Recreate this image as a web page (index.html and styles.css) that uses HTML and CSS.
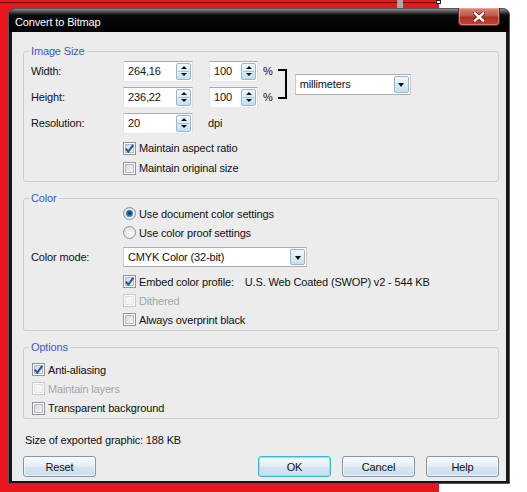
FILE: index.html
```html
<!DOCTYPE html>
<html>
<head>
<meta charset="utf-8">
<title>Convert to Bitmap</title>
<link rel="stylesheet" href="styles.css">
</head>
<body>
<div class="desk">
  <div class="wall"></div>
  <div class="wall-line"></div>
  <div class="wall-bar"></div>
  <div class="wall-handle"></div>

  <div class="dialog">
    <div class="titlebar"><span class="title">Convert to Bitmap</span></div>
    <div class="close">
      <svg width="12" height="10" viewBox="0 0 12 10">
        <path d="M2 1.5 L10 8.5 M10 1.5 L2 8.5" stroke="#6a1a14" stroke-width="4" stroke-linecap="square"/>
        <path d="M2 1.5 L10 8.5 M10 1.5 L2 8.5" stroke="#ffffff" stroke-width="2.4" stroke-linecap="square"/>
      </svg>
    </div>

    <div class="content">
      <fieldset class="group g-size">
        <legend>Image Size</legend>
        <div class="size-top">
          <div class="size-rows">
            <div class="row">
              <span class="lbl">Width:</span>
              <div class="spin s-main"><span class="val">264,16</span><span class="spinbtn"><i class="up"></i><i class="dn"></i></span></div>
              <div class="spin s-pct"><span class="val">100</span><span class="spinbtn"><i class="up"></i><i class="dn"></i></span></div>
              <span class="pct">%</span>
            </div>
            <div class="row">
              <span class="lbl">Height:</span>
              <div class="spin s-main"><span class="val">236,22</span><span class="spinbtn"><i class="up"></i><i class="dn"></i></span></div>
              <div class="spin s-pct"><span class="val">100</span><span class="spinbtn"><i class="up"></i><i class="dn"></i></span></div>
              <span class="pct">%</span>
            </div>
          </div>
          <div class="bracket"></div>
          <div class="select s-units"><span class="val">millimeters</span><span class="dropbtn"><i></i></span></div>
        </div>
        <div class="row">
          <span class="lbl">Resolution:</span>
          <div class="spin s-main"><span class="val">20</span><span class="spinbtn"><i class="up"></i><i class="dn"></i></span></div>
          <span class="unit">dpi</span>
        </div>
        <div class="opt ind o20 first"><span class="cb on"><svg width="11" height="11" viewBox="0 0 11 11"><path d="M1.8 5.6 L4.3 8.6 L9.3 1.8" fill="none" stroke="#1f5aa6" stroke-width="2.1"/></svg></span><span>Maintain aspect ratio</span></div>
        <div class="opt ind o20"><span class="cb"></span><span>Maintain original size</span></div>
      </fieldset>

      <fieldset class="group g-color">
        <legend>Color</legend>
        <div class="opt ind r-first"><span class="rb on"></span><span>Use document color settings</span></div>
        <div class="opt ind"><span class="rb"></span><span>Use color proof settings</span></div>
        <div class="row cm">
          <span class="lbl">Color mode:</span>
          <div class="select s-mode"><span class="val">CMYK Color (32-bit)</span><span class="dropbtn"><i></i></span></div>
        </div>
        <div class="opt ind after-cm"><span class="cb on"><svg width="11" height="11" viewBox="0 0 11 11"><path d="M1.8 5.6 L4.3 8.6 L9.3 1.8" fill="none" stroke="#1f5aa6" stroke-width="2.1"/></svg></span><span class="embed">Embed color profile:</span><span class="prof">U.S. Web Coated (SWOP) v2 - 544 KB</span></div>
        <div class="opt ind dis"><span class="cb"></span><span>Dithered</span></div>
        <div class="opt ind"><span class="cb"></span><span>Always overprint black</span></div>
      </fieldset>

      <fieldset class="group g-opts">
        <legend>Options</legend>
        <div class="opt first3"><span class="cb on"><svg width="11" height="11" viewBox="0 0 11 11"><path d="M1.8 5.6 L4.3 8.6 L9.3 1.8" fill="none" stroke="#1f5aa6" stroke-width="2.1"/></svg></span><span>Anti-aliasing</span></div>
        <div class="opt sub dis"><span class="cb"></span><span>Maintain layers</span></div>
        <div class="opt o20 sub"><span class="cb"></span><span>Transparent background</span></div>
      </fieldset>

      <div class="size-note">Size of exported graphic: 188 KB</div>

      <div class="buttons">
        <div class="btn">Reset</div>
        <div class="spacer"></div>
        <div class="btn default">OK</div>
        <div class="btn">Cancel</div>
        <div class="btn">Help</div>
      </div>
    </div>
  </div>
</div>
</body>
</html>
```

FILE: styles.css
```css
* { box-sizing: border-box; }

html, body {
  margin: 0;
  padding: 0;
}

body {
  background: #ffffff;
  width: 527px;
  height: 492px;
  overflow: hidden;
  font-family: "Liberation Sans", Arial, sans-serif;
  font-size: 11px;
  letter-spacing: -0.15px;
  color: #111;
}

.desk {
  position: relative;
  width: 527px;
  height: 492px;
}

/* background desktop pieces */
.wall {
  position: absolute;
  left: 0;
  top: 0;
  width: 439px;
  height: 492px;
  background: #e9161f;
}
.wall-line {
  position: absolute;
  left: 0;
  top: 2px;
  width: 437px;
  height: 1px;
  background: #5a1014;
}
.wall-bar {
  position: absolute;
  left: 397px;
  top: 0;
  width: 6px;
  height: 9px;
  background: #a9a9a9;
}
.wall-handle {
  position: absolute;
  left: 436px;
  top: 0;
  width: 5px;
  height: 4px;
  background: #fff;
  border: 1px solid #222;
}

/* dialog window */
.dialog {
  position: absolute;
  left: 8px;
  top: 8px;
  width: 502px;
  height: 476px;
  background: #161616;
  border: 1px solid #555;
  border-radius: 7px 7px 0 0;
  display: flex;
  flex-direction: column;
  padding: 0 3px 2px 3px;
}

.titlebar {
  flex: none;
  height: 23px;
  margin: 0 -3px;
  padding-left: 6px;
  display: flex;
  align-items: center;
  border-radius: 6px 6px 0 0;
  background: linear-gradient(#8c8c8c 0px, #4a4a4a 3px, #0a0a0a 6px, #000 23px);
}
.title {
  color: #fff;
  font-size: 11px;
  margin-top: 3px;
}

.close {
  position: absolute;
  left: 449px;
  top: -1px;
  width: 42px;
  height: 18px;
  border: 1px solid #5b2a26;
  border-top: none;
  border-radius: 0 0 4px 4px;
  background: linear-gradient(#d88a7e 0%, #c4564a 45%, #ad3226 55%, #be4636 100%);
  box-shadow: inset 0 0 0 1px rgba(255, 200, 190, 0.45);
  display: flex;
  align-items: center;
  justify-content: center;
}

.content {
  flex: 1;
  background: #ececec;
  padding: 13px 7px 0 11px;
  display: flex;
  flex-direction: column;
}

/* group boxes */
.group {
  margin: 0;
  border: 1px solid #cacfd3;
  border-radius: 3px;
  padding: 0 8px 0 7px;
  min-width: 0;
}
.group legend {
  color: #3a5bbf;
  line-height: 13px;
  padding: 0 2px;
  margin-left: -2px;
}
.g-size { padding-bottom: 3px; }
.g-color { margin-top: 10px; padding-bottom: 1px; }
.g-opts { margin-top: 10px; padding-bottom: 0; }

.row {
  height: 26px;
  display: flex;
  align-items: center;
}
.lbl {
  width: 92px;
  flex: none;
}

.size-top {
  display: flex;
  align-items: center;
}

/* spin edits */
.spin {
  height: 21px;
  background: #fff;
  border: 1px solid #abadb3;
  border-left-color: #e2e3ea;
  border-right-color: #dbdfe6;
  border-bottom-color: #e3e9ef;
  display: flex;
  align-items: center;
  padding: 0 1px 0 4px;
  flex: none;
}
.spin .val { flex: 1; }
.s-main { width: 70px; margin-right: 16px; }
.s-pct { width: 49px; }
.pct { margin-left: 5px; }
.unit { margin-left: -1px; }

.spinbtn {
  width: 15px;
  height: 17px;
  border: 1px solid #9db4c6;
  border-radius: 2px;
  background: linear-gradient(#f3f9fd, #d9ecf8 50%, #c4e0f3);
  display: flex;
  flex-direction: column;
  align-items: center;
  justify-content: space-around;
  padding: 1px 0;
  position: relative;
}
.spinbtn::after {
  content: "";
  position: absolute;
  left: 1px;
  right: 1px;
  top: 7px;
  height: 1px;
  background: #a8c0d2;
}
.spinbtn i {
  display: block;
  width: 0;
  height: 0;
  border-left: 3px solid transparent;
  border-right: 3px solid transparent;
}
.spinbtn .up { border-bottom: 3px solid #111; }
.spinbtn .dn { border-top: 3px solid #111; }

.bracket {
  width: 9px;
  height: 30px;
  margin-left: 5px;
  border: 2px solid #000;
  border-left: none;
  flex: none;
}

/* combo boxes */
.select {
  height: 21px;
  background: #fff;
  border: 1px solid #abadb3;
  border-left-color: #c9ccd2;
  border-right-color: #c9ccd2;
  display: flex;
  align-items: center;
  padding: 0 1px 0 4px;
  flex: none;
}
.select .val { flex: 1; }
.s-units { width: 116px; margin-left: 8px; }
.s-mode { width: 184px; height: 20px; }

.dropbtn {
  width: 15px;
  height: 17px;
  border: 1px solid #9db4c6;
  border-radius: 2px;
  background: linear-gradient(#f3f9fd, #d9ecf8 50%, #c4e0f3);
  display: flex;
  align-items: center;
  justify-content: center;
}
.s-mode .dropbtn { height: 16px; }
.dropbtn i {
  display: block;
  width: 0;
  height: 0;
  border-left: 3.5px solid transparent;
  border-right: 3.5px solid transparent;
  border-top: 4px solid #111;
  margin-top: 1px;
}

/* checkbox / radio rows */
.opt {
  height: 19px;
  display: flex;
  align-items: center;
}
.o20 { height: 20px; }
.ind { margin-left: 92px; }
.g-size .first { margin-top: 2px; }
.g-color .r-first { margin-top: -1px; }
.g-opts .first3 { margin-top: 6px; margin-left: 1px; }
.g-opts .sub { margin-left: 1px; }
.cm { height: 24px; margin-top: 3px; }
.after-cm { margin-top: 3px; }

.cb {
  width: 13px;
  height: 13px;
  flex: none;
  margin-right: 3px;
  border: 1px solid #8f9499;
  background: #fff;
  padding: 1px;
  position: relative;
}
.cb::before {
  content: "";
  position: absolute;
  left: 1px;
  top: 1px;
  right: 1px;
  bottom: 1px;
  border: 1px solid #b4bac1;
  background: linear-gradient(135deg, #d4d8dd, #f6f7f8);
}
.cb svg {
  position: absolute;
  left: 0;
  top: 0;
}
.dis { color: #a5a5a5; }
.dis .cb { border-color: #c7c9cb; }
.dis .cb::before { border-color: #e0e2e4; background: #f4f4f4; }

.rb {
  width: 13px;
  height: 13px;
  flex: none;
  margin-right: 3px;
  border-radius: 50%;
  border: 1px solid #8f9499;
  background: radial-gradient(circle at 60% 65%, #fafafa 0, #dfe2e5 70%, #c8cdd2 100%);
  display: flex;
  align-items: center;
  justify-content: center;
}
.rb.on::after {
  content: "";
  width: 7px;
  height: 7px;
  border-radius: 50%;
  background: radial-gradient(circle at 50% 45%, #0c3a5c 0, #145f8e 35%, #2fa6dc 75%, #8fd3f0 100%);
}

.embed { margin-right: 11px; }

.size-note {
  margin-top: 14px;
  margin-left: 2px;
  height: 14px;
  line-height: 14px;
}

.buttons {
  display: flex;
  gap: 11px;
  margin-top: 9px;
}
.spacer { flex: 1; }
.btn {
  width: 73px;
  height: 21px;
  border: 1px solid #7f97ac;
  border-radius: 3px;
  background: linear-gradient(#f5f9fc 0%, #e6eff6 48%, #d5e6f2 52%, #c9dfee 100%);
  box-shadow: inset 0 0 0 1px rgba(255, 255, 255, 0.6);
  display: flex;
  align-items: center;
  justify-content: center;
  color: #111;
}
.btn.default {
  border-color: #38b9d6;
  box-shadow: inset 0 0 0 1px #8fe1f2;
}
```
